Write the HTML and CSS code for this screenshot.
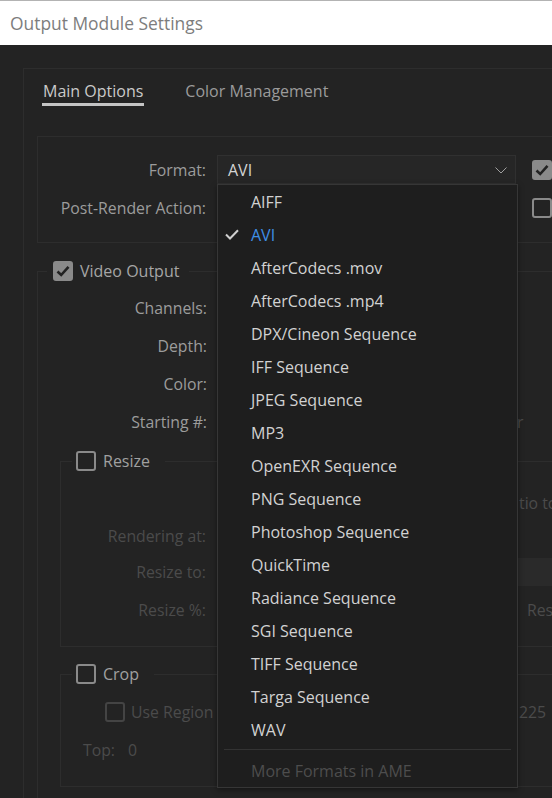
FILE: index.html
```html
<!DOCTYPE html>
<html>
<head>
<meta charset="utf-8">
<link rel="stylesheet" href="styles.css">
</head>
<body>
<div class="titlebar">Output Module Settings</div>
<div class="main">
  <div class="outer">
    <div class="tabs">
      <span class="tab active">Main Options</span>
      <span class="tab">Color Management</span>
    </div>
    <div class="format-panel">
      <div class="frow">
        <span class="flabel">Format:</span>
        <div class="select"><span>AVI</span><svg class="chev" width="12" height="7" viewBox="0 0 12 7"><polyline points="0.5,0.5 6,6 11.5,0.5" fill="none" stroke="#a0a0a0" stroke-width="1"/></svg></div>
        <span class="cb checked"><svg width="16" height="16" viewBox="0 0 16 16"><polyline points="2.5,8.5 6.2,12 13.5,3.8" fill="none" stroke="#222" stroke-width="2.6"/></svg></span>
      </div>
      <div class="frow">
        <span class="flabel">Post-Render Action:</span>
        <div class="select blank"></div>
        <span class="cb"></span>
      </div>
    </div>
    <fieldset class="video">
      <legend><span class="cb checked"><svg width="16" height="16" viewBox="0 0 16 16"><polyline points="2.5,8.5 6.2,12 13.5,3.8" fill="none" stroke="#222" stroke-width="2.6"/></svg></span>Video Output</legend>
      <div class="vrow"><span class="vlabel">Channels:</span><span class="ctrl"></span><span class="right"></span></div>
      <div class="vrow"><span class="vlabel">Depth:</span><span class="ctrl"></span><span class="right"></span></div>
      <div class="vrow"><span class="vlabel">Color:</span><span class="ctrl"></span><span class="right"></span></div>
      <div class="vrow"><span class="vlabel">Starting #:</span><span class="ctrl"></span><span class="right dim">r</span></div>
      <fieldset class="sub resize">
        <legend><span class="cb"></span>Resize</legend>
        <div class="rrow r1"><span class="rlabel"></span><span class="ctrl"></span><span class="right dim pad2">tio to</span></div>
        <div class="rrow r2"><span class="rlabel dim">Rendering at:</span><span class="ctrl"></span><span class="right"></span></div>
        <div class="rrow r3"><span class="rlabel dim">Resize to:</span><span class="ctrl"></span><span class="right"><span class="inputbox"></span></span></div>
        <div class="rrow r3"><span class="rlabel dim">Resize %:</span><span class="ctrl"></span><span class="right dim pad10">Res</span></div>
      </fieldset>
      <fieldset class="sub crop">
        <legend><span class="cb"></span>Crop</legend>
        <div class="crow"><span class="cleft"><span class="cb dimcb"></span><span class="dim">Use Region</span></span><span class="right dim pad2">225</span></div>
        <div class="crow"><span class="cleft top"><span class="dim">Top:</span><span class="dim zero">0</span></span><span class="right"></span></div>
      </fieldset>
    </fieldset>
  </div>
</div>
<div class="dropdown">
  <div class="item">AIFF</div>
  <div class="item sel"><svg class="check" width="14" height="11" viewBox="0 0 14 11"><polyline points="1,5.5 5,9.5 13,1.2" fill="none" stroke="#cfcfcf" stroke-width="2"/></svg>AVI</div>
  <div class="item">AfterCodecs .mov</div>
  <div class="item">AfterCodecs .mp4</div>
  <div class="item">DPX/Cineon Sequence</div>
  <div class="item">IFF Sequence</div>
  <div class="item">JPEG Sequence</div>
  <div class="item">MP3</div>
  <div class="item">OpenEXR Sequence</div>
  <div class="item">PNG Sequence</div>
  <div class="item">Photoshop Sequence</div>
  <div class="item">QuickTime</div>
  <div class="item">Radiance Sequence</div>
  <div class="item">SGI Sequence</div>
  <div class="item">TIFF Sequence</div>
  <div class="item">Targa Sequence</div>
  <div class="item">WAV</div>
  <div class="sep"></div>
  <div class="item more">More Formats in AME</div>
</div>
</body>
</html>
```
FILE: styles.css
```css
* { box-sizing: border-box; }
html, body { margin: 0; padding: 0; }
body {
  width: 552px;
  height: 798px;
  overflow: hidden;
  position: relative;
  background: #232323;
  font-family: "Open Sans", "Noto Sans", sans-serif;
  font-size: 15.8px;
  color: #9c9c9c;
}
.titlebar {
  height: 45px;
  background: #ffffff;
  border-top: 1px solid #b3b3b3;
  display: flex;
  align-items: center;
  padding-left: 10px;
  font-size: 17.4px;
  color: #7d7d7d;
}
.main { padding: 23px 0 0 23px; }
.outer {
  width: 529px;
  height: 730px;
  border: 1px solid #2d2d2d;
  border-right: 0;
  border-bottom: 0;
  padding-top: 12px;
}
.tabs {
  display: flex;
  gap: 41px;
  padding-left: 18px;
  line-height: 20px;
  font-size: 16px;
}
.tab {
  padding-bottom: 2px;
  border-bottom: 3px solid transparent;
  color: #9b9b9b;
}
.tab.active {
  color: #cacaca;
  border-bottom-color: #c4c4c4;
  padding: 0 1px 2px;
}
.format-panel {
  margin: 30px 0 0 13px;
  border: 1px solid #2d2d2d;
  border-right: 0;
  padding: 18px 0 20px;
  display: flex;
  flex-direction: column;
  gap: 9px;
}
.frow { display: flex; align-items: center; height: 29px; }
.flabel { width: 168px; text-align: right; }
.select {
  width: 299px;
  height: 29px;
  margin: 0 16px 0 11px;
  border: 1px solid #303030;
  background: #262626;
  display: flex;
  align-items: center;
  justify-content: space-between;
  padding: 0 8px 0 10px;
  color: #d4d4d4;
  font-size: 16px;
}
.chev { margin-top: 1px; }
.cb {
  width: 20px;
  height: 20px;
  flex: none;
  border: 2px solid #8a8a8a;
  border-radius: 3px;
  display: inline-flex;
  align-items: center;
  justify-content: center;
}
.cb.checked { background: #8a8a8a; }
.cb.dimcb { border-color: #444; }
fieldset {
  margin: 0;
  padding: 0;
  border: 1px solid #2d2d2d;
  border-right: 0;
  min-width: 0;
}
legend {
  display: flex;
  align-items: center;
  gap: 7px;
  height: 20px;
  line-height: 20px;
  font-size: 16px;
  color: #a6a6a6;
}
.video { margin: 18px 0 0 13px; padding-top: 8px; height: 560px; border-bottom: 0; }
.video > legend { margin-left: 9px; padding: 0 10px 0 6px; }
.vrow, .rrow, .crow { display: flex; align-items: center; height: 38px; }
.vlabel { width: 169px; text-align: right; margin-right: 10px; flex: none; }
.ctrl { width: 300px; flex: none; }
.right { flex: 1; min-width: 0; white-space: nowrap; overflow: hidden; }
.dim { color: #4b4b4b; }
.pad2 { padding-left: 2px; }
.pad10 { padding-left: 10px; }
.sub { margin: 10px 0 0 22px; }
.sub > legend { margin-left: 11px; padding: 0 15px 0 4px; color: #a0a0a0; }
.resize { padding: 16px 0 17px; }
.rlabel { width: 145px; text-align: right; margin-right: 11px; flex: none; }
.rrow.r1 { height: 32px; }
.rrow.r2 { height: 34px; }
.inputbox { display: block; height: 28px; background: #2a2a2a; }
.crop { margin-top: 17px; padding: 9px 0 17px; }
.cleft { width: 456px; flex: none; display: flex; align-items: center; gap: 6px; padding-left: 44px; white-space: nowrap; overflow: hidden; }
.cleft.top { padding-left: 22px; gap: 0; }
.zero { margin-left: 13px; }
.dropdown {
  position: absolute;
  left: 217px;
  top: 184px;
  width: 301px;
  height: 604px;
  background: #1e1e1e;
  border: 1px solid #363636;
  box-shadow: 0 2px 6px rgba(0,0,0,0.4);
  font-size: 16px;
  color: #d2d2d2;
}
.item {
  position: relative;
  height: 33px;
  display: flex;
  align-items: center;
  padding-left: 33px;
}
.item.sel { color: #3f8fe6; }
.check { position: absolute; left: 7px; top: 11px; }
.sep { margin: 3px 6px 0; border-top: 1px solid #333; }
.item.more { height: 38px; padding-top: 4px; color: #4d4d4d; }
```
